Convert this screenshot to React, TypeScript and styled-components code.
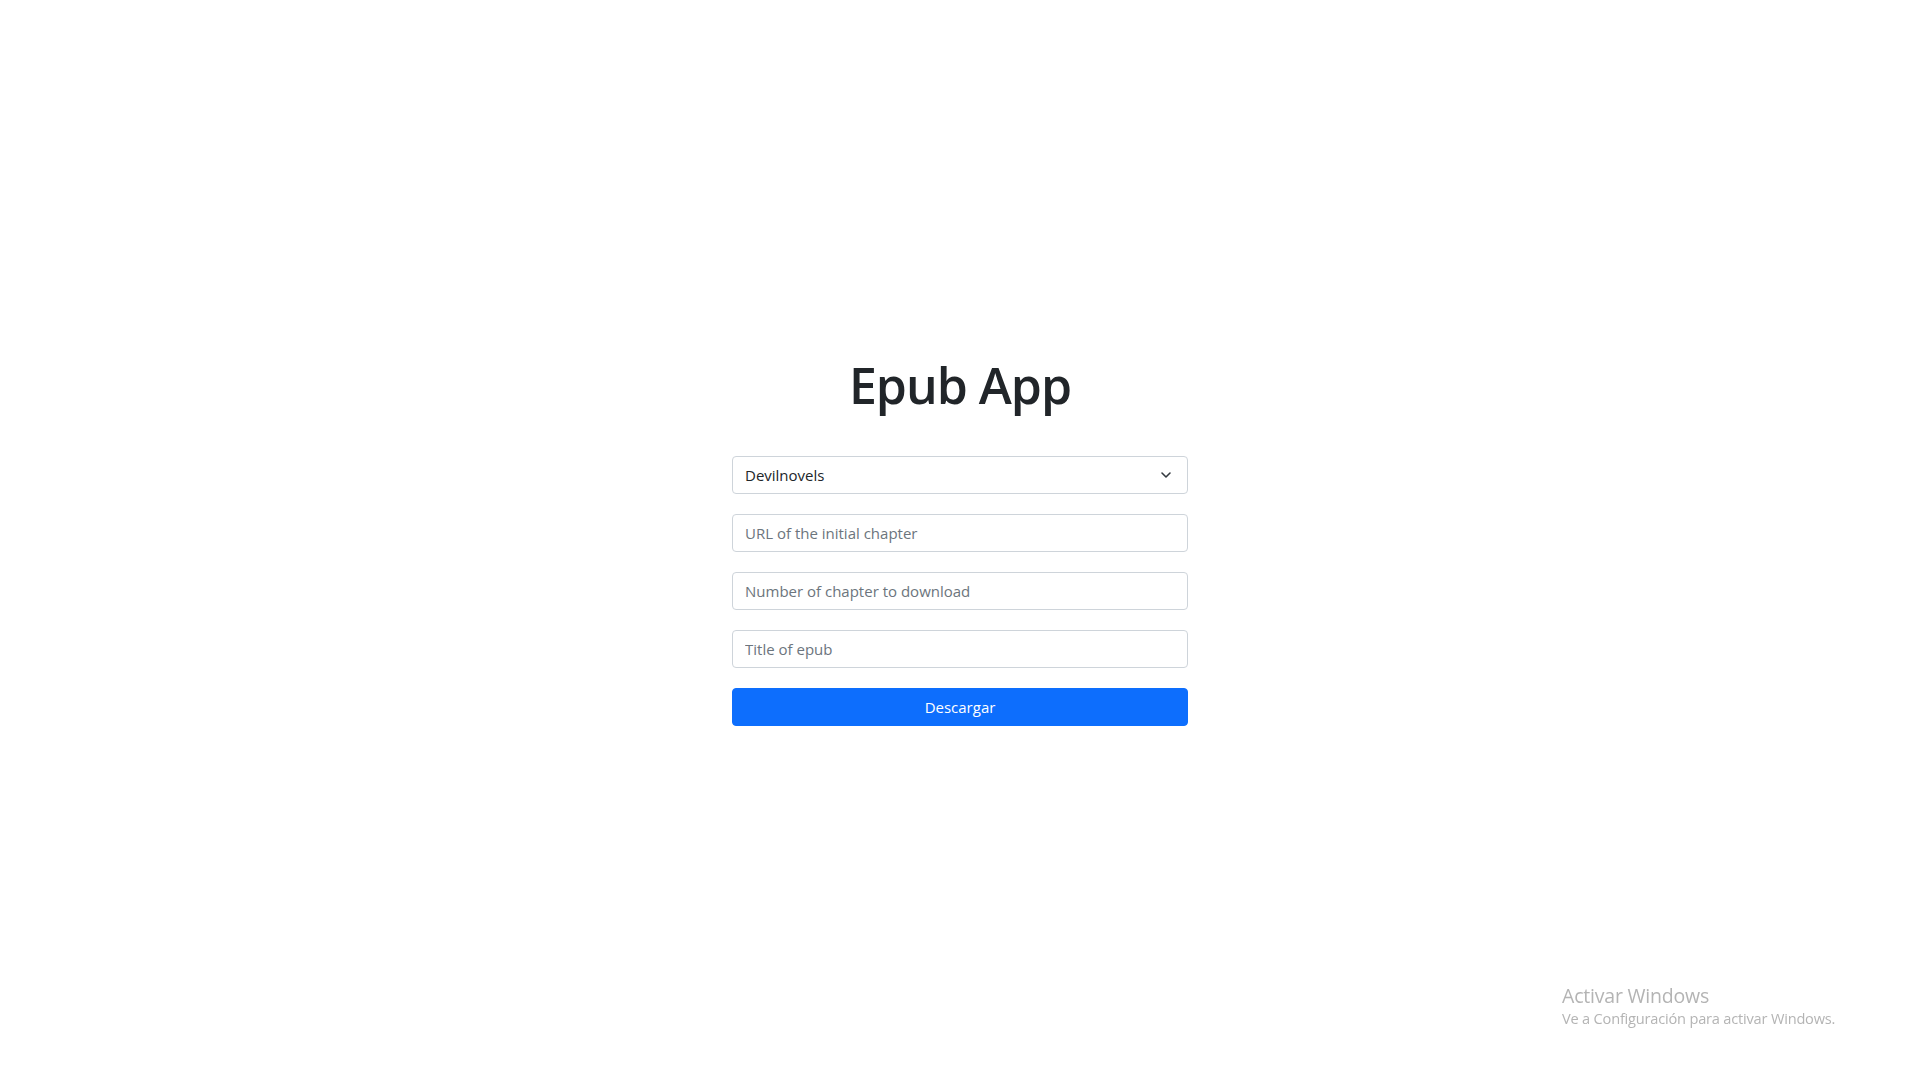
import React from "react";
import styled, { createGlobalStyle } from "styled-components";

const GlobalStyle = createGlobalStyle`
  html, body { margin: 0; padding: 0; background: #fff; }
  body {
    font-family: "Open Sans", "Noto Sans", "Liberation Sans", sans-serif;
    color: #212529;
    font-size: 16px;
    line-height: 1.5;
  }
  * { box-sizing: border-box; }
`;

const Page = styled.div`
  min-height: 100vh;
  display: flex;
  align-items: center;
  justify-content: center;
`;

const Column = styled.div`
  width: 456px;
  display: flex;
  flex-direction: column;
`;

const Title = styled.h1`
  margin: 0 0 41px;
  text-align: center;
  font-size: 50px;
  font-weight: 600;
  line-height: 1.2;
  color: #212529;
  letter-spacing: -1px;
`;

const Form = styled.form`
  display: flex;
  flex-direction: column;
  gap: 20px;
`;

const SelectWrap = styled.div`
  position: relative;
`;

const Select = styled.select`
  appearance: none;
  -webkit-appearance: none;
  display: block;
  width: 100%;
  height: 38px;
  padding: 6px 36px 6px 12px;
  font-family: inherit;
  font-size: 15px;
  color: #212529;
  background: #fff;
  border: 1px solid #ced4da;
  border-radius: 4px;
  outline: none;
`;

const Chevron = styled.svg`
  position: absolute;
  right: 17px;
  top: 16px;
  width: 10px;
  height: 6px;
  pointer-events: none;
  overflow: visible;
`;

const Input = styled.input`
  display: block;
  width: 100%;
  height: 38px;
  padding: 6px 12px;
  font-family: inherit;
  font-size: 15px;
  color: #212529;
  background: #fff;
  border: 1px solid #ced4da;
  border-radius: 4px;
  outline: none;
  &::placeholder { color: #6c757d; opacity: 1; }
`;

const Button = styled.button`
  display: block;
  width: 100%;
  height: 38px;
  padding: 6px 12px;
  font-family: inherit;
  font-size: 15px;
  color: #fff;
  background: #0d6efd;
  border: 1px solid #0d6efd;
  border-radius: 4px;
  cursor: pointer;
`;

const Watermark = styled.div`
  position: fixed;
  left: 1562px;
  top: 984px;
  color: #b4b4b4;
  font-family: "Open Sans", "Noto Sans", sans-serif;
  line-height: 1.2;
`;

const WmTitle = styled.div`
  font-size: 19.5px;
  letter-spacing: -0.2px;
`;

const WmSub = styled.div`
  font-size: 14.6px;
  letter-spacing: -0.2px;
  margin-top: 3px;
`;

export default function App() {
  return (
    <>
      <GlobalStyle />
      <Page>
        <Column>
          <Title>Epub App</Title>
          <Form onSubmit={(e) => e.preventDefault()}>
            <SelectWrap>
              <Select defaultValue="devilnovels">
                <option value="devilnovels">Devilnovels</option>
              </Select>
              <Chevron viewBox="0 0 10 6">
                <path
                  fill="none"
                  stroke="#343a40"
                  strokeLinecap="round"
                  strokeLinejoin="round"
                  strokeWidth="1.6"
                  d="M1 1 5 5 9 1"
                />
              </Chevron>
            </SelectWrap>
            <Input placeholder="URL of the initial chapter" />
            <Input placeholder="Number of chapter to download" />
            <Input placeholder="Title of epub" />
            <Button type="submit">Descargar</Button>
          </Form>
        </Column>
      </Page>
      <Watermark>
        <WmTitle>Activar Windows</WmTitle>
        <WmSub>Ve a Configuración para activar Windows.</WmSub>
      </Watermark>
    </>
  );
}
